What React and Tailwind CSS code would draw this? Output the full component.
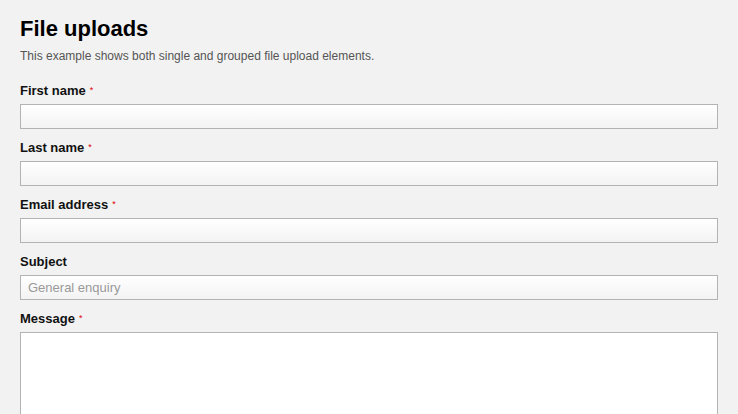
import React from 'react';

const fields = [
    { label: 'First name', required: true },
    { label: 'Last name', required: true },
    { label: 'Email address', required: true },
    { label: 'Subject', required: false, placeholder: 'General enquiry' },
];

const Asterisk = () => (
    <span className="text-[#d00] text-[9px] leading-none font-normal relative -top-[2px] ml-1">*</span>
);

const Field = ({ label, required, placeholder }) => (
    <div className="mb-[10px]">
        <label className="block text-[13px] leading-4 font-bold text-[#111] pt-px mb-[5px]">
            {label}
            {required && <Asterisk />}
        </label>
        <input
            type="text"
            placeholder={placeholder}
            className="block w-full h-[25px] px-[7px] text-[13px] text-[#333] placeholder:text-[#999] border border-[#b3b3b3] bg-gradient-to-b from-white to-[#f3f3f3] outline-none"
        />
    </div>
);

export default function App() {
    return (
        <div className="min-h-screen bg-[#f2f2f2] px-5 pt-[16px] overflow-hidden font-['Liberation_Sans',Arial,sans-serif]">
            <h1 className="text-[22px] leading-[26px] font-bold text-black mb-[6px]">File uploads</h1>
            <p className="text-xs leading-4 text-[#555] mb-[18px]">
                This example shows both single and grouped file upload elements.
            </p>

            {fields.map((f) => (
                <Field key={f.label} {...f} />
            ))}

            <div>
                <label className="block text-[13px] leading-4 font-bold text-[#111] pt-px mb-[5px]">
                    Message
                    <Asterisk />
                </label>
                <textarea className="block w-full h-[160px] border border-[#b3b3b3] bg-white outline-none resize-none" />
            </div>
        </div>
    );
}
